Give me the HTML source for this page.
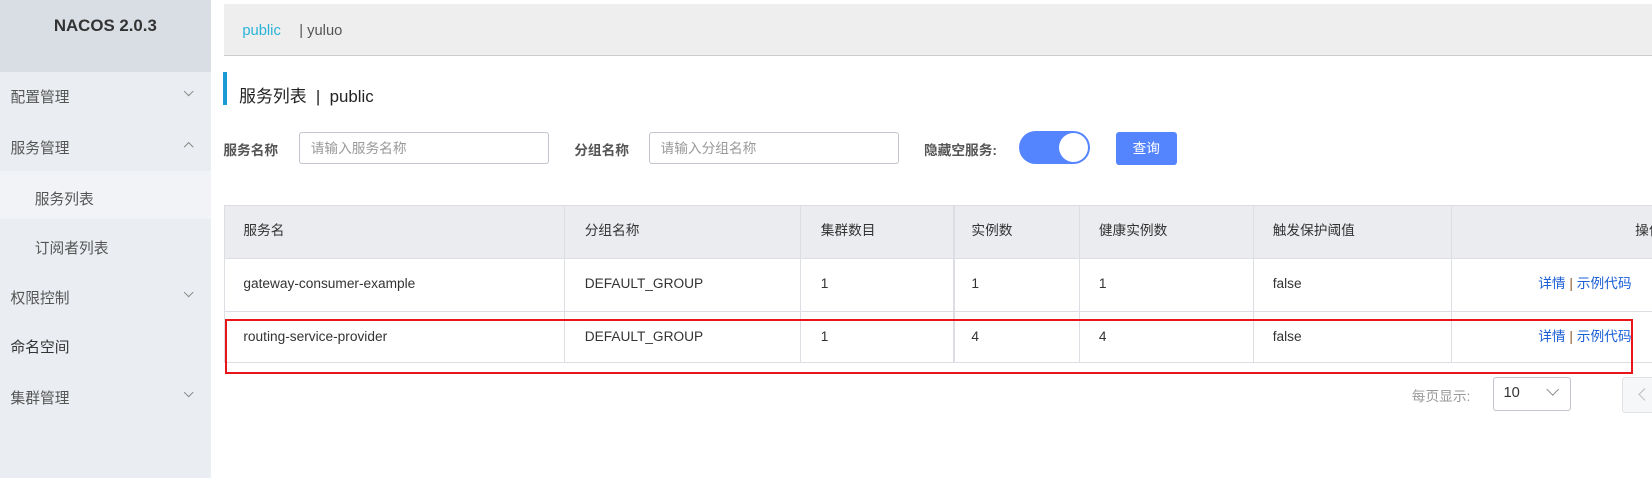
<!DOCTYPE html>
<html><head><meta charset="utf-8"><style>
html,body{margin:0;padding:0;width:1652px;height:478px;overflow:hidden;background:#fff}
#w{zoom:1.05357;width:1568px;height:454px;position:relative;font-family:"Liberation Sans","Noto Sans CJK SC",sans-serif;color:#333;font-size:14px}
#w div{white-space:nowrap}
.a{position:absolute}
#side{position:absolute;left:0;top:0;width:200px;height:454px;background:#eaedf1}
#logo{position:absolute;left:0;top:0;width:200px;height:68px;background:#d9dee5;text-align:center;font-weight:bold;font-size:16px;line-height:50px;color:#333}
.mi{position:absolute;left:10px;font-size:14px;color:#555}
.ch{position:absolute;left:176px;width:6px;height:6px;border-right:1px solid #888;border-bottom:1px solid #888}
.in{position:absolute;height:31px;border:1px solid #c4c6cf;border-radius:3px;background:#fff;font-size:13px;color:#999;line-height:31px;padding-left:10px;box-sizing:border-box}
.lb{position:absolute;font-size:13px;font-weight:bold;color:#555}
.vl{position:absolute;width:1px;background:#dcdee3}
.hl{position:absolute;left:213px;width:1355px;height:1px;background:#dcdee3}
.t{position:absolute;font-size:13px;color:#333;line-height:16px}
.lk{position:absolute;font-size:13px;color:#1a5fd6;line-height:16px}
</style></head><body><div id="w">
<div id="side">
<div id="logo">NACOS 2.0.3</div>
<div class="mi" style="top:82px">配置管理</div><div class="ch" style="top:84px;transform:rotate(45deg)"></div>
<div class="mi" style="top:130px">服务管理</div><div class="ch" style="top:136px;transform:rotate(-135deg)"></div>
<div style="position:absolute;left:0;top:162px;width:200px;height:46px;background:#f2f3f6"></div>
<div class="mi" style="top:178px;left:33px">服务列表</div>
<div class="mi" style="top:225px;left:33px">订阅者列表</div>
<div class="mi" style="top:272px">权限控制</div><div class="ch" style="top:274px;transform:rotate(45deg)"></div>
<div class="mi" style="top:319px;color:#333">命名空间</div>
<div class="mi" style="top:367px">集群管理</div><div class="ch" style="top:369px;transform:rotate(45deg)"></div>
</div>
<div style="position:absolute;left:213px;top:4px;width:1355px;height:48px;background:#eeeeee;border-bottom:1px solid #ccc"></div>
<div class="a" style="left:230px;top:22px;color:#2ab3d9;font-size:14px">public</div>
<div class="a" style="left:284px;top:22px;color:#555;font-size:14px">| yuluo</div>
<div style="position:absolute;left:212px;top:68px;width:3px;height:32px;background:#1c9ad6"></div>
<div class="a" style="left:227px;top:78px;font-size:16px;color:#222">服务列表 &nbsp;|&nbsp; public</div>
<div class="lb" style="left:212px;top:132px">服务名称</div>
<div class="in" style="left:284px;top:125px;width:237px">请输入服务名称</div>
<div class="lb" style="left:545px;top:132px">分组名称</div>
<div class="in" style="left:616px;top:125px;width:237px">请输入分组名称</div>
<div class="lb" style="left:877px;top:132px">隐藏空服务:</div>
<div style="position:absolute;left:967px;top:124px;width:68px;height:32px;border-radius:16px;background:#5584ff"></div>
<div style="position:absolute;left:1005px;top:126px;width:28px;height:28px;border-radius:50%;background:#fff"></div>
<div style="position:absolute;left:1059px;top:125px;width:58px;height:32px;border-radius:3px;background:#5584ff;color:#fff;font-size:13px;text-align:center;line-height:32px">查询</div>
<div style="position:absolute;left:213px;top:195px;width:1355px;height:50px;background:#ebecf0"></div>
<div class="hl" style="top:195px"></div><div class="hl" style="top:245px"></div><div class="hl" style="top:295px"></div><div class="hl" style="top:344px"></div>
<div class="vl" style="left:213px;top:195px;height:150px"></div>
<div class="vl" style="left:535px;top:195px;height:150px"></div>
<div class="vl" style="left:759px;top:195px;height:150px"></div>
<div class="vl" style="left:905px;top:195px;height:150px"></div>
<div class="vl" style="left:1024px;top:195px;height:150px"></div>
<div class="vl" style="left:1189px;top:195px;height:150px"></div>
<div class="vl" style="left:1377px;top:195px;height:150px"></div>
<div class="t" style="left:231px;top:212px">服务名</div><div class="t" style="left:555px;top:212px">分组名称</div><div class="t" style="left:779px;top:212px">集群数目</div><div class="t" style="left:922px;top:212px">实例数</div><div class="t" style="left:1043px;top:212px">健康实例数</div><div class="t" style="left:1208px;top:212px">触发保护阈值</div><div class="t" style="left:1552px;top:212px">操作</div>
<div class="t" style="left:231px;top:262px">gateway-consumer-example</div><div class="t" style="left:555px;top:262px">DEFAULT_GROUP</div><div class="t" style="left:779px;top:262px">1</div><div class="t" style="left:922px;top:262px">1</div><div class="t" style="left:1043px;top:262px">1</div><div class="t" style="left:1208px;top:262px">false</div>
<div class="lk" style="left:1460px;top:262px">详情 <span style="color:#8a5a2a">|</span> 示例代码</div>
<div class="t" style="left:231px;top:312px">routing-service-provider</div><div class="t" style="left:555px;top:312px">DEFAULT_GROUP</div><div class="t" style="left:779px;top:312px">1</div><div class="t" style="left:922px;top:312px">4</div><div class="t" style="left:1043px;top:312px">4</div><div class="t" style="left:1208px;top:312px">false</div>
<div class="lk" style="left:1460px;top:312px">详情 <span style="color:#8a5a2a">|</span> 示例代码</div>
<div style="position:absolute;left:214px;top:303px;width:1332px;height:48px;border:2px solid #e8151b"></div>
<div class="a" style="left:1340px;top:365px;font-size:13px;color:#999">每页显示:</div>
<div style="position:absolute;left:1417px;top:358px;width:74px;height:32px;border:1px solid #c4c6cf;border-radius:3px;box-sizing:border-box"></div>
<div class="a" style="left:1427px;top:365px;font-size:14px">10</div>
<div style="position:absolute;left:1469px;top:365px;width:8px;height:8px;border-right:1px solid #888;border-bottom:1px solid #888;transform:rotate(45deg)"></div>
<div style="position:absolute;left:1540px;top:358px;width:40px;height:32px;border:1px solid #e0e2e6;background:#f6f7f9;border-radius:3px"></div>
<div style="position:absolute;left:1557px;top:370px;width:8px;height:8px;border-left:1px solid #bbb;border-bottom:1px solid #bbb;transform:rotate(45deg)"></div>
</div></body></html>
